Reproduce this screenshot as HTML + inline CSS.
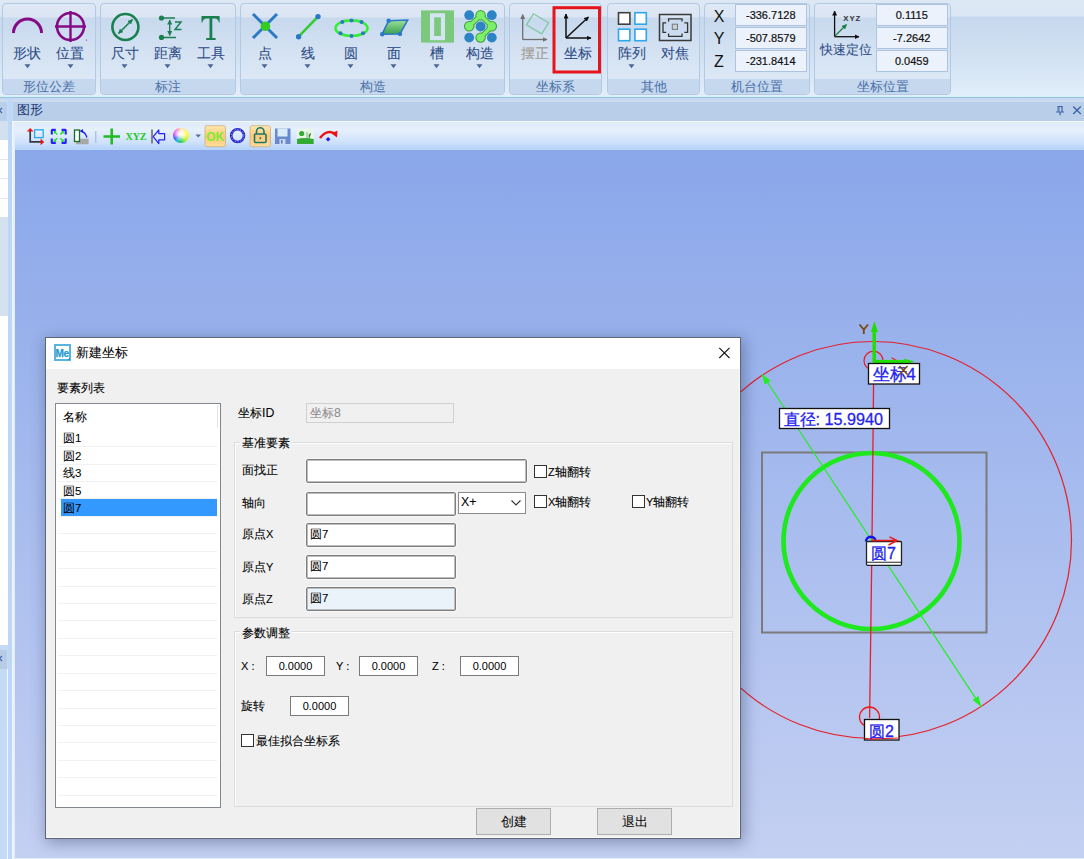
<!DOCTYPE html>
<html><head><meta charset="utf-8">
<style>
*{box-sizing:border-box;margin:0;padding:0}
html,body{width:1084px;height:859px;overflow:hidden;background:#c4d9f2;font-family:"Liberation Sans",sans-serif;}
.a{position:absolute}
#ribbon{left:0;top:0;width:1084px;height:97px;background:linear-gradient(#dde8f5 0,#dbe6f4 16px,#c6d8ee 17px,#cfdff1 50px,#e1eefa 95px,#e3f1fb 97px)}
.grp{position:absolute;top:3px;height:92px;border:1px solid #b3c8e2;border-radius:4px;background:linear-gradient(#dfe8f5 0,#dbe5f3 13px,#c8d9ee 14px,#d3e1f2 45px,#dce8f6 75px);overflow:hidden}
.grp .lbl{position:absolute;left:0;right:0;bottom:0;height:15.5px;background:#c5d8ee;color:#4a6fa8;font-size:13.4px;line-height:16px;text-align:center}
.it{position:absolute;top:0;width:40px;height:76px}
.it .t{position:absolute;left:-10px;right:-10px;top:42px;text-align:center;font-size:13px;line-height:16px;color:#2c4a85}
.dd{position:absolute;top:63px;width:0;height:0;border-left:3px solid transparent;border-right:3px solid transparent;border-top:3px solid #4a6696}
.rt{text-align:center;font-size:14px;line-height:16px;color:#2c4a85;margin-left:0;-webkit-text-stroke-width:.08px}
.xyz{width:14px;text-align:center;font-size:16px;line-height:18px;color:#111;margin-top:1.5px}
.dt{font-size:12.3px;line-height:16px;color:#000;white-space:nowrap;-webkit-text-stroke-width:.08px}
.gb{border:1px solid #dcdcdc;box-shadow:inset 1px 1px 0 #fff}
.ib{border:1px solid #7e7e7e;border-radius:2px;background:#fff;box-shadow:inset 0 0 0 1px #bdbdbd,0 0 0 1px #f8f8f8}
.cb{width:13px;height:13px;border:1px solid #333;background:#fff}
.nbx{height:20px;border:1px solid #7a7a7a;background:#fff;font-size:11px;line-height:18px;text-align:center;color:#000}
.btn{border:1px solid #adadad;background:#e1e1e1;font-size:13px;line-height:25px;text-align:center;color:#000}
.nb{position:absolute;width:71.5px;height:22px;border:1px solid #adc3e0;background:#ecf2fb;font-size:11px;line-height:20px;text-align:center;color:#111;-webkit-text-stroke:.2px #111}
</style></head><body>
<div id="ribbon" class="a"></div>
<!-- groups -->
<div class="grp" style="left:2px;width:94px"><div class="lbl">形位公差</div></div>
<div class="grp" style="left:100px;width:136px"><div class="lbl">标注</div></div>
<div class="grp" style="left:240px;width:265px"><div class="lbl">构造</div></div>
<div class="grp" style="left:509px;width:93px"><div class="lbl">坐标系</div></div>
<div class="grp" style="left:607px;width:93px"><div class="lbl">其他</div></div>
<div class="grp" style="left:704px;width:106px"><div class="lbl">机台位置</div></div>
<div class="grp" style="left:814px;width:137px"><div class="lbl">坐标位置</div></div>

<!-- ribbon items text -->
<div class="a rt" style="left:7px;top:45px;width:40px">形状</div>
<div class="a rt" style="left:50px;top:45px;width:40px">位置</div>
<div class="a rt" style="left:105px;top:45px;width:40px">尺寸</div>
<div class="a rt" style="left:148px;top:45px;width:40px">距离</div>
<div class="a rt" style="left:191px;top:45px;width:40px">工具</div>
<div class="a rt" style="left:245px;top:45px;width:40px">点</div>
<div class="a rt" style="left:288px;top:45px;width:40px">线</div>
<div class="a rt" style="left:331px;top:45px;width:40px">圆</div>
<div class="a rt" style="left:374px;top:45px;width:40px">面</div>
<div class="a rt" style="left:417px;top:45px;width:40px">槽</div>
<div class="a rt" style="left:460px;top:45px;width:40px">构造</div>
<div class="a rt" style="left:515px;top:45px;width:40px;color:#a09a90">摆正</div>
<div class="a rt" style="left:558px;top:45px;width:40px">坐标</div>
<div class="a rt" style="left:612px;top:45px;width:40px">阵列</div>
<div class="a rt" style="left:655px;top:45px;width:40px">对焦</div>
<div class="a rt" style="left:816px;top:41.5px;width:60px;font-size:13.3px">快速定位</div>
<div class="a xyz" style="left:712px;top:6px">X</div>
<div class="a xyz" style="left:712px;top:28px">Y</div>
<div class="a xyz" style="left:712px;top:51px">Z</div>
<div class="nb" style="left:735px;top:4px">-336.7128</div>
<div class="nb" style="left:735px;top:27px">-507.8579</div>
<div class="nb" style="left:735px;top:50px">-231.8414</div>
<div class="nb" style="left:876px;top:4px">0.1115</div>
<div class="nb" style="left:876px;top:27px">-7.2642</div>
<div class="nb" style="left:876px;top:50px">0.0459</div>
<svg class="a" style="left:0;top:0" width="1084" height="97" viewBox="0 0 1084 97">
<defs>
<marker id="ah" viewBox="0 0 10 10" refX="9" refY="5" markerUnits="userSpaceOnUse" markerWidth="5" markerHeight="5" orient="auto-start-reverse"><path d="M0,0 L10,5 L0,10 z" fill="#1a8050"/></marker>
<marker id="ak" viewBox="0 0 10 10" refX="9" refY="5" markerUnits="userSpaceOnUse" markerWidth="5" markerHeight="5" orient="auto-start-reverse"><path d="M0,0 L10,5 L0,10 z" fill="#111"/></marker>
<marker id="ag" viewBox="0 0 10 10" refX="9" refY="5" markerUnits="userSpaceOnUse" markerWidth="5" markerHeight="5" orient="auto-start-reverse"><path d="M0,0 L10,5 L0,10 z" fill="#707070"/></marker>
<marker id="agr" viewBox="0 0 10 10" refX="9" refY="5" markerUnits="userSpaceOnUse" markerWidth="5" markerHeight="5" orient="auto"><path d="M0,0 L10,5 L0,10 z" fill="#1a8040"/></marker>
<linearGradient id="pg" x1="0" y1="0" x2="0" y2="1"><stop offset="0" stop-color="#9ee09a"/><stop offset="1" stop-color="#3aa050"/></linearGradient>
</defs>
<!-- dropdown arrows -->
<g fill="#4a6696">
<path d="M24.5,64.3 h6 l-3,4z"/><path d="M67.5,64.3 h6 l-3,4z"/>
<path d="M121.5,64.3 h6 l-3,4z"/><path d="M164.5,64.3 h6 l-3,4z"/><path d="M207.5,64.3 h6 l-3,4z"/>
<path d="M261.5,64.3 h6 l-3,4z"/><path d="M304.5,64.3 h6 l-3,4z"/><path d="M347.5,64.3 h6 l-3,4z"/>
<path d="M390.5,64.3 h6 l-3,4z"/><path d="M433.5,64.3 h6 l-3,4z"/><path d="M476.5,64.3 h6 l-3,4z"/>
<path d="M628.5,64.3 h6 l-3,4z"/>
</g>
<!-- 形状 -->
<path d="M13.5,33 A14,14 0 0 1 41.5,33" fill="none" stroke="#850a85" stroke-width="3"/>
<!-- 位置 -->
<circle cx="70.5" cy="26.5" r="13.5" fill="none" stroke="#850a85" stroke-width="2.6"/>
<path d="M70.5,11 V42 M55,26.5 H86" stroke="#850a85" stroke-width="2.4"/>
<circle cx="86.5" cy="40" r=".6" fill="#850a85"/>
<!-- 尺寸 -->
<circle cx="125.4" cy="27" r="13" fill="none" stroke="#1a8050" stroke-width="2.6"/>
<path d="M118.5,33.5 L132.5,19.5" stroke="#1a8050" stroke-width="1.6" marker-start="url(#ah)" marker-end="url(#ah)"/>
<!-- 距离 -->
<circle cx="161.5" cy="18" r="2.6" fill="#1a8050"/><circle cx="161.5" cy="37.4" r="2.6" fill="#1a8050"/>
<path d="M161.5,18 H175 M161.5,37.4 H176" stroke="#1a8050" stroke-width="1.5"/>
<path d="M169.7,20 V35.5" stroke="#1a8050" stroke-width="1.4" marker-start="url(#ah)" marker-end="url(#ah)"/>
<path d="M175,22 H181 L175,29.5 H181.5" fill="none" stroke="#1a8050" stroke-width="1.5"/>
<!-- 工具 T -->
<path d="M201.5,15.9 H219.6 V22.5 H218.9 Q218.3,18.6 215,18.4 H212.3 V38 H215.6 V40.1 H206.2 V38 H209.5 V18.4 H206.5 Q203,18.6 202.3,22.5 H201.5 Z" fill="#1a8050"/>
<!-- 点 -->
<path d="M253,14 L277,38 M277,14 L253,38" stroke="#2a78c6" stroke-width="3"/>
<circle cx="265.4" cy="26.3" r="4.8" fill="#33cc22"/>
<!-- 线 -->
<path d="M298.6,36.7 L318,16.6" stroke="#33cc33" stroke-width="2.6"/>
<circle cx="298.6" cy="36.7" r="2.7" fill="#2a78c6"/><circle cx="318" cy="16.6" r="2.7" fill="#2a78c6"/>
<!-- 圆 -->
<ellipse cx="351.5" cy="28.2" rx="16" ry="7.8" fill="none" stroke="#33ee33" stroke-width="2.6"/>
<g fill="#2a78c6"><circle cx="351.5" cy="20.4" r="2"/><circle cx="351.5" cy="36" r="2"/><circle cx="342.3" cy="21.9" r="2"/><circle cx="361.5" cy="22.1" r="2"/><circle cx="340.5" cy="33.2" r="2"/><circle cx="363" cy="33.2" r="2"/></g>
<!-- 面 -->
<path d="M388.6,20.8 L407.7,20 L400,33.9 L382,34.3 Z" fill="url(#pg)" stroke="#2a78c6" stroke-width="1.5"/>
<g fill="#2a78c6"><circle cx="388.6" cy="20.8" r="2.2"/><circle cx="400" cy="33.9" r="2.2"/><circle cx="382.2" cy="34.3" r="2.2"/></g>
<!-- 槽 -->
<rect x="421" y="10.4" width="33" height="32.2" fill="#7cc87c"/>
<rect x="430" y="13.2" width="15" height="27" fill="#d4e4f2"/>
<rect x="434.2" y="17.3" width="6.7" height="18.7" fill="#7cc87c"/>
<!-- 构造 -->
<g fill="#2b84c6"><circle cx="469.2" cy="15.2" r="4.9"/><circle cx="491.8" cy="15.2" r="4.9"/><circle cx="480.6" cy="26.5" r="5"/><circle cx="469.2" cy="37.6" r="4.9"/><circle cx="491.8" cy="37.6" r="4.9"/></g>
<path d="M469.2,26.3 L480.6,15.2 L491.8,26.3 L480.6,37.6" fill="none" stroke="#3c9a3c" stroke-width="5.2" stroke-linejoin="round"/>
<g fill="#3c9a3c"><circle cx="480.6" cy="15.2" r="5.2"/><circle cx="469.2" cy="26.3" r="5.2"/><circle cx="480.6" cy="37.6" r="5.2"/><circle cx="491.8" cy="26.3" r="5.2"/></g>
<path d="M469.2,26.3 L480.6,15.2 L491.8,26.3 L480.6,37.6" fill="none" stroke="#7cf06a" stroke-width="3.4" stroke-linejoin="round"/>
<g fill="#7cf06a"><circle cx="480.6" cy="15.2" r="4.2"/><circle cx="469.2" cy="26.3" r="4.2"/><circle cx="480.6" cy="37.6" r="4.2"/><circle cx="491.8" cy="26.3" r="4.2"/></g>
<!-- 摆正 -->
<path d="M522.7,39.5 V14.5" stroke="#707070" stroke-width="1.3" marker-end="url(#ag)"/>
<path d="M522.7,39.5 H547" stroke="#707070" stroke-width="1.3" marker-end="url(#ag)"/>
<path d="M526.4,24.9 L533.4,13.8 L548.6,22.8 L541.7,33.9 Z" fill="none" stroke="#80c8a0" stroke-width="1.3"/>
<!-- 坐标 -->
<path d="M566,38 V14" stroke="#111" stroke-width="1.5" marker-end="url(#ak)"/>
<path d="M566,38 H591" stroke="#111" stroke-width="1.5" marker-end="url(#ak)"/>
<path d="M566,38 L588.5,17" stroke="#111" stroke-width="1.5" marker-end="url(#ak)"/>
<rect x="554" y="7.7" width="45.5" height="64.3" fill="none" stroke="#e8141c" stroke-width="3"/>
<!-- 阵列 -->
<rect x="618.5" y="12.7" width="11.4" height="11.5" fill="#fff" stroke="#404040" stroke-width="1.6"/>
<rect x="634.9" y="12.7" width="11.4" height="11.5" fill="#fff" stroke="#2fa6ea" stroke-width="1.6"/>
<rect x="618.5" y="29.2" width="11.4" height="11.5" fill="#fff" stroke="#2fa6ea" stroke-width="1.6"/>
<rect x="634.9" y="29.2" width="11.4" height="11.5" fill="#fff" stroke="#2fa6ea" stroke-width="1.6"/>
<!-- 对焦 -->
<rect x="659.5" y="14.5" width="31.5" height="26" fill="none" stroke="#3a3a3a" stroke-width="1.5"/>
<path d="M666.2,22.9 H663 V32.3 H666.2 M684.3,22.9 H687.6 V32.3 H684.3 M668.6,21.6 V18.8 H682 V21.6 M668.6,33.4 V36.3 H682 V33.4" fill="none" stroke="#333" stroke-width="1.3"/>
<rect x="672.3" y="24.2" width="5.2" height="5.2" fill="#c8d0dc" stroke="#777" stroke-width="1"/>
<!-- 快速定位 -->
<path d="M834.6,36.7 V11" stroke="#111" stroke-width="1.3" marker-end="url(#ak)"/>
<path d="M834.6,36.7 H859" stroke="#111" stroke-width="1.3" marker-end="url(#ak)"/>
<path d="M835,36 L846.5,24.5" stroke="#1a8040" stroke-width="1.2" marker-end="url(#agr)"/>
<text x="843.2" y="20.8" font-family="Liberation Sans" font-size="7.8" font-weight="bold" fill="#333" letter-spacing="1">XYZ</text>
</svg>

<!-- ribbon bottom lines -->
<div class="a" style="left:0;top:96px;width:1084px;height:1px;background:#c9f4fa"></div>
<div class="a" style="left:0;top:97px;width:1084px;height:1px;background:#a9bedb"></div>
<div class="a" style="left:0;top:98px;width:1084px;height:4px;background:linear-gradient(#c2d6ef,#cfdef1)"></div>

<!-- left dock panel -->
<div class="a" style="left:0;top:102px;width:8px;height:757px;background:#c4dbf7"></div>
<div class="a" style="left:0;top:102px;width:7px;height:19px;background:#b9cfe9"></div>
<div class="a" style="left:0;top:121px;width:8px;height:19px;background:#d2e0f0"></div>
<div class="a" style="left:0;top:140px;width:8px;height:77px;background:#fff"></div>
<div class="a" style="left:0;top:159px;width:8px;height:1px;background:#e3e8ee"></div>
<div class="a" style="left:0;top:178px;width:8px;height:1px;background:#e3e8ee"></div>
<div class="a" style="left:0;top:198px;width:8px;height:1px;background:#e3e8ee"></div>
<div class="a" style="left:0;top:217px;width:8px;height:99px;background:#d4e2f0"></div>
<div class="a" style="left:0;top:316px;width:8px;height:329px;background:#fff"></div>
<div class="a" style="left:0;top:650px;width:7px;height:19px;background:#b8cce6"></div>
<div class="a" style="left:7px;top:669px;width:1px;height:190px;background:#f2f8fe"></div>
<div class="a" style="left:8px;top:98px;width:4px;height:761px;background:#bcd7f8"></div>
<div class="a" style="left:12px;top:121px;width:3px;height:738px;background:linear-gradient(90deg,#f4f8fd,#dfeaf8)"></div>

<!-- main panel header -->
<div class="a" style="left:13px;top:102px;width:1071px;height:19px;background:#b9cfe9"></div>
<div class="a" style="left:17px;top:100px;font-size:13px;line-height:19px;color:#1a3874">图形</div>
<div class="a" style="left:12px;top:121px;width:1072px;height:1px;background:#f4f8fd"></div>
<!-- toolbar -->
<div class="a" style="left:15px;top:122px;width:1069px;height:28px;background:linear-gradient(#e0ebf9 0,#e6f0fc 8px,#cfe2fb 20px,#b7d3fa 27px,#bcd7fb 28px)"></div>
<!-- canvas -->
<div class="a" id="canvas" style="left:15px;top:150px;width:1069px;height:708px;background:linear-gradient(#8aa7ea 0,#c4d0f2 708px)"></div>
<div class="a" style="left:15px;top:858px;width:1069px;height:1px;background:#e8eef8"></div>


<!-- canvas drawings -->
<svg class="a" style="left:0;top:150px" width="1084" height="708" viewBox="0 150 1084 708">
<defs>
<marker id="gA" viewBox="0 0 12 8" refX="12" refY="4" markerUnits="userSpaceOnUse" markerWidth="12" markerHeight="7" orient="auto-start-reverse"><path d="M0,0 L12,4 L0,8 z" fill="#22ee22"/></marker>
</defs>
<circle cx="873" cy="540" r="198.5" fill="none" stroke="#e4202a" stroke-width="1.2"/>
<rect x="762" y="452.5" width="224.5" height="180" fill="none" stroke="#7b7b7b" stroke-width="2"/>
<circle cx="871.5" cy="541" r="88" fill="none" stroke="#1ee81e" stroke-width="4.6"/>
<path d="M873.8,361 L873.2,420 L872,540 L869.6,718" fill="none" stroke="#e4202a" stroke-width="1.3"/>
<path d="M762,374 L981.3,706.8" stroke="#22ee22" stroke-width="1.2" marker-start="url(#gA)" marker-end="url(#gA)"/>
<circle cx="873.5" cy="360.7" r="9.5" fill="none" stroke="#e4202a" stroke-width="1.2"/>
<path d="M891.5,357.8 L896.5,360.5" stroke="#e4202a" stroke-width="1.2"/>
<!-- Y axis -->
<path d="M874.2,362.5 V331" stroke="#22dd00" stroke-width="3.4"/>
<path d="M874.4,321 L877.8,332 H870.9 Z" fill="#22dd00"/>
<path d="M873,361.6 H905" stroke="#22dd00" stroke-width="3.4"/>
<path d="M914.6,361.6 L904.3,358.8 V364.4 Z" fill="#22dd00"/>
<path d="M859.5,324.5 L863.8,329.5 L868,324.5 M863.8,329.5 V334" fill="none" stroke="#7a4810" stroke-width="1.8"/>
<!-- label 坐标4 -->
<rect x="868.5" y="363.5" width="51" height="20.5" fill="#fff" stroke="#111" stroke-width="1.3"/>
<text x="872.5" y="380" font-family="Liberation Sans" font-size="16.5" fill="#2424ee" stroke="#2424ee" stroke-width=".3">坐标4</text>
<path d="M899.5,366 L907.5,374.5 M907.5,366 L899.5,374.5" stroke="#7a4810" stroke-width="1.6"/>
<!-- label 直径 -->
<rect x="779.5" y="408.5" width="110" height="20" fill="#fff" stroke="#111" stroke-width="1.3"/>
<text x="783.5" y="424.8" font-family="Liberation Sans" font-size="16.2" fill="#2424ee" stroke="#2424ee" stroke-width=".3">直径: 15.9940</text>
<!-- circle 7 marker -->
<path d="M866,541.5 A4.8,4.8 0 1 1 875.6,541.5" fill="none" stroke="#1010ee" stroke-width="2.4"/>
<rect x="866.5" y="541.5" width="35" height="23.8" rx="1" fill="#fff" stroke="#222" stroke-width="1.3"/>
<path d="M866.5,562.3 H901.5" stroke="#222" stroke-width="1.1"/>
<path d="M871.5,540.6 H897 M889.5,536.8 L897,540.6 L888.5,545" fill="none" stroke="#ee1a1a" stroke-width="1.5"/>
<text x="871" y="559" font-family="Liberation Sans" font-size="16" fill="#2424ee" stroke="#2424ee" stroke-width=".3">圆7</text>
<!-- circle 2 marker -->
<circle cx="869.5" cy="717" r="10" fill="none" stroke="#ee1a1a" stroke-width="1.3"/>
<rect x="864.5" y="719.5" width="34.5" height="20.5" fill="#fff" stroke="#111" stroke-width="1.3"/>
<path d="M865,738.6 Q880,739.2 898,738" stroke="#ee1a1a" stroke-width="1.2" fill="none"/>
<text x="869" y="737" font-family="Liberation Sans" font-size="16" fill="#2424ee" stroke="#2424ee" stroke-width=".3">圆2</text>
</svg>
<!-- toolbar icons -->
<svg class="a" style="left:0;top:120px" width="360" height="30" viewBox="0 120 360 30">
<defs>
<linearGradient id="okg" x1="0" y1="0" x2="0" y2="1"><stop offset="0" stop-color="#ffe6b0"/><stop offset=".5" stop-color="#ffc878"/><stop offset="1" stop-color="#ffdc98"/></linearGradient>
<radialGradient id="cw" cx=".4" cy=".35" r=".7"><stop offset="0" stop-color="#fff"/><stop offset=".35" stop-color="#ffe070"/><stop offset=".6" stop-color="#ff50a0"/><stop offset="1" stop-color="#3050e0"/></radialGradient>
</defs>
<!-- icon1 -->
<path d="M30.2,131 V141.9 H41.5" fill="none" stroke="#333a44" stroke-width="1.7"/>
<path d="M30.2,128 L26.8,131.6 H33.6 Z M44.2,141.9 L40.6,138.6 V145.2 Z" fill="#ee1111"/>
<rect x="34.6" y="129.8" width="8.6" height="7.8" fill="none" stroke="#2aa8ee" stroke-width="1.3"/>
<!-- icon2 -->
<path d="M55.8,129.9 H52.3 Q51.8,129.9 51.8,130.4 V134.6 M61.6,129.9 H65.2 Q65.7,129.9 65.7,130.4 V134.6 M51.8,138.5 V142.4 Q51.8,142.9 52.3,142.9 H55.8 M65.7,138.5 V142.4 Q65.7,142.9 65.2,142.9 H61.6" fill="none" stroke="#2222ff" stroke-width="2.1"/>
<path d="M57.3,134.5 L54.5,131.8 M60.3,134.5 L63,131.8 M57.3,138.3 L54.5,141 M60.3,138.3 L63,141" stroke="#22dd22" stroke-width="1.3"/>
<path d="M53.6,130.9 L56.6,131.3 L54,133.9 Z M63.9,130.9 L60.9,131.3 L63.5,133.9 Z M53.6,141.9 L56.6,141.5 L54,138.9 Z M63.9,141.9 L60.9,141.5 L63.5,138.9 Z" fill="#22dd22"/>
<!-- icon3 -->
<rect x="76" y="138.7" width="12.6" height="5.6" fill="#a8a8a8"/>
<rect x="74.5" y="130" width="5" height="11.5" fill="#fff" stroke="#1a6a2a" stroke-width="1.3"/>
<path d="M80.5,131 Q85,131.5 87,137.5" fill="none" stroke="#1a1aee" stroke-width="1.3"/>
<path d="M80,131 L83,129 L83,133 Z" fill="#1a1aee"/>
<rect x="95.3" y="131" width="1" height="12" fill="#9ab2d6"/>
<!-- plus -->
<path d="M111.7,128.5 V144.5 M103.5,136.5 H120" stroke="#22bb22" stroke-width="2.6"/>
<text x="125.6" y="139.7" font-family="Liberation Serif" font-size="10.2" font-weight="bold" fill="#22cc22" letter-spacing="-0.3">XYZ</text>
<!-- arrow -->
<rect x="151" y="129.5" width="2" height="14" fill="#858585"/>
<path d="M153.2,136.7 L158.8,130 V133.6 H164.6 V139.8 H158.8 V143.6 Z" fill="none" stroke="#2222ee" stroke-width="1.2" stroke-linejoin="round"/>
<!-- color wheel -->

<path d="M195.5,134.5 H201 L198.2,137.5 Z" fill="#5a6a8a"/>
<!-- OK -->
<rect x="205" y="125.7" width="20.5" height="21" rx="2" fill="url(#okg)" stroke="#c8b080" stroke-width=".8"/>
<text x="206.2" y="140.8" font-family="Liberation Sans" font-size="12" font-weight="bold" fill="#77ee33">OK</text>
<!-- dotted circle -->
<circle cx="237.6" cy="135.6" r="6.4" fill="none" stroke="#2424c8" stroke-width="2.6"/><circle cx="237.6" cy="135.6" r="6.2" fill="none" stroke="#e8ecff" stroke-width=".7" stroke-dasharray="1.2 1.6"/>
<!-- lock -->
<rect x="250" y="125.7" width="20.5" height="21" rx="2" fill="url(#okg)" stroke="#c8b080" stroke-width=".8"/>
<path d="M256.5,134 V131.5 A3.7,3.7 0 0 1 264,131.5 V134" fill="none" stroke="#1a7a6a" stroke-width="1.6"/>
<rect x="254.5" y="134" width="11.5" height="8.5" rx="1" fill="none" stroke="#1a7a6a" stroke-width="1.6"/>
<rect x="259.5" y="137.2" width="1.6" height="2" fill="#1a7a6a"/>
<!-- save -->
<path d="M275,128.5 H290.5 V144 H275 Z" fill="#6a8ad0"/>
<rect x="277.5" y="128.5" width="10" height="8" fill="#d8ecfa"/>
<rect x="279.5" y="139" width="6" height="5" fill="#c8d8f0"/>
<rect x="281" y="140" width="1.5" height="3.5" fill="#5a7ac0"/>
<!-- image icon -->
<rect x="297" y="128.5" width="16.7" height="15.5" fill="#e8f6e8"/>
<rect x="297" y="139" width="16.7" height="5" fill="#33aa33"/>
<circle cx="301.7" cy="133.5" r="2.6" fill="#33aa33"/>
<path d="M307,139 V132 M309,139 V134.5 L311,133" stroke="#66bb66" stroke-width="1"/>
<path d="M297,139 Q303,137 313.7,139" fill="#33aa33"/>
<!-- red arrow -->
<path d="M320,138 Q327,129 334.5,133.5" fill="none" stroke="#ee1111" stroke-width="2.6"/>
<path d="M337,137.5 L337.5,130.5 L331.5,133.5 Z" fill="#ee1111"/>
<path d="M328.1,137 L330.4,139.3 L328.1,141.6 L325.8,139.3 Z" fill="#1a1aee"/>
</svg>
<div class="a" style="left:173.4px;top:127.9px;width:15.2px;height:15.2px;border-radius:50%;background:radial-gradient(circle at 45% 40%,#fff 0,rgba(255,255,255,.85) 18%,rgba(255,255,255,0) 60%),conic-gradient(#ffd8a0 0deg,#ffff40 70deg,#c0f040 130deg,#30d060 180deg,#20b0e0 220deg,#3050f0 245deg,#e030e0 290deg,#ff50a0 330deg,#ffd8a0 360deg)"></div>
<!-- header pin & close -->
<svg class="a" style="left:1050px;top:102px" width="34" height="18" viewBox="1050 102 34 18">
<path d="M1057.5,106.5 H1062.8 M1058.2,106.5 V111.8 M1062,106.5 V111.8 M1056.2,112 H1064 M1060.1,112 V115.2" fill="none" stroke="#3a64a4" stroke-width="1.2"/><rect x="1058.6" y="107" width="1.2" height="4.6" fill="#7a98c8"/>
<path d="M1073.2,106.5 L1080.8,114 M1080.8,106.5 L1073.2,114" stroke="#3a64a4" stroke-width="1.3"/>
</svg>
<svg class="a" style="left:0;top:102px" width="8" height="18"><path d="M-3,6 L2,11 M2,6 L-3,11" stroke="#3a64a4" stroke-width="1.2"/></svg>
<svg class="a" style="left:0;top:650px" width="8" height="18"><path d="M-3,6 L2,11 M2,6 L-3,11" stroke="#3a64a4" stroke-width="1.2"/></svg>

<!-- dialog -->
<div class="a" id="dlg" style="left:45px;top:337px;width:696px;height:502px;border:1px solid #5d6675;background:#f0f0f0;box-shadow:2px 3px 14px 1px rgba(25,35,75,.36)"></div>
<div class="a" style="left:46px;top:338px;width:694px;height:31px;background:#fff"></div>
<div class="a" style="left:739px;top:369px;width:1px;height:469px;background:#fafafa"></div>
<div class="a" style="left:46px;top:837px;width:694px;height:1px;background:#fafafa"></div>
<svg class="a" style="left:54px;top:344px" width="17" height="17"><rect x="1" y="1" width="15" height="15" fill="#fff" stroke="#5ab4e0" stroke-width="2"/><text x="1.6" y="13.2" font-family="Liberation Sans" font-size="10" font-weight="bold" fill="#1f98d2" stroke="#1f98d2" stroke-width=".25" letter-spacing="-0.5">Me</text><path d="M13.5,16 L16,13.5 V16Z" fill="#1f98d2"/></svg>
<div class="a dt" style="left:75.5px;top:345px;font-size:12.5px">新建坐标</div>
<svg class="a" style="left:716px;top:345px" width="16" height="16"><path d="M3.3,2.8 L13.5,13 M13.5,2.8 L3.3,13" stroke="#1a1a1a" stroke-width="1.15"/></svg>
<div class="a dt" style="left:57px;top:380px">要素列表</div>
<div class="a" style="left:55px;top:403px;width:166px;height:405px;border:1px solid #828790;background:#fff"></div>
<div class="a" style="left:217px;top:405px;width:1px;height:23px;background:#e5e5e5"></div>
<div class="a dt" style="left:63px;top:409px">名称</div>

<div class="a" style="left:58px;top:446px;width:159px;height:1px;background:#f1f1f1"></div>
<div class="a" style="left:58px;top:464px;width:159px;height:1px;background:#f1f1f1"></div>
<div class="a" style="left:58px;top:481px;width:159px;height:1px;background:#f1f1f1"></div>
<div class="a" style="left:58px;top:498px;width:159px;height:1px;background:#f1f1f1"></div>
<div class="a" style="left:58px;top:516px;width:159px;height:1px;background:#f1f1f1"></div>
<div class="a" style="left:58px;top:533px;width:159px;height:1px;background:#f1f1f1"></div>
<div class="a" style="left:58px;top:551px;width:159px;height:1px;background:#f1f1f1"></div>
<div class="a" style="left:58px;top:568px;width:159px;height:1px;background:#f1f1f1"></div>
<div class="a" style="left:58px;top:586px;width:159px;height:1px;background:#f1f1f1"></div>
<div class="a" style="left:58px;top:603px;width:159px;height:1px;background:#f1f1f1"></div>
<div class="a" style="left:58px;top:620px;width:159px;height:1px;background:#f1f1f1"></div>
<div class="a" style="left:58px;top:638px;width:159px;height:1px;background:#f1f1f1"></div>
<div class="a" style="left:58px;top:655px;width:159px;height:1px;background:#f1f1f1"></div>
<div class="a" style="left:58px;top:673px;width:159px;height:1px;background:#f1f1f1"></div>
<div class="a" style="left:58px;top:690px;width:159px;height:1px;background:#f1f1f1"></div>
<div class="a" style="left:58px;top:708px;width:159px;height:1px;background:#f1f1f1"></div>
<div class="a" style="left:58px;top:725px;width:159px;height:1px;background:#f1f1f1"></div>
<div class="a" style="left:58px;top:742px;width:159px;height:1px;background:#f1f1f1"></div>
<div class="a" style="left:58px;top:760px;width:159px;height:1px;background:#f1f1f1"></div>
<div class="a" style="left:58px;top:777px;width:159px;height:1px;background:#f1f1f1"></div>
<div class="a" style="left:58px;top:795px;width:159px;height:1px;background:#f1f1f1"></div>
<div class="a" style="left:61px;top:499px;width:156px;height:17px;background:#3399ff"></div>
<div class="a dt" style="left:63px;top:430px">圆<span style="font-size:11.5px">1</span></div>
<div class="a dt" style="left:63px;top:448px">圆<span style="font-size:11.5px">2</span></div>
<div class="a dt" style="left:63px;top:465px">线<span style="font-size:11.5px">3</span></div>
<div class="a dt" style="left:63px;top:483px">圆<span style="font-size:11.5px">5</span></div>
<div class="a dt" style="left:63px;top:500px">圆<span style="font-size:11.5px">7</span></div>

<div class="a dt" style="left:238px;top:405px">坐标ID</div>
<div class="a" style="left:306px;top:403px;width:148px;height:20px;border:1px solid #d0d0d0;background:#f0f0f0"></div>
<div class="a dt" style="left:310px;top:405px;color:#8c8c8c">坐标8</div>

<div class="a gb" style="left:234px;top:442px;width:499px;height:176px"></div>
<div class="a dt" style="left:240px;top:435px;padding:0 2px;background:#f0f0f0">基准要素</div>
<div class="a dt" style="left:242px;top:462px">面找正</div>
<div class="a ib" style="left:306px;top:459px;width:221px;height:24px"></div>
<div class="a cb" style="left:534px;top:465px"></div>
<div class="a dt" style="left:548px;top:464px"><span style="font-size:11px">Z</span>轴翻转</div>
<div class="a dt" style="left:242px;top:495px">轴向</div>
<div class="a ib" style="left:306px;top:492px;width:150px;height:24px"></div>
<div class="a" style="left:458px;top:492px;width:68px;height:22px;border:1px solid #8a8a8a;background:#fff"></div>
<div class="a dt" style="left:461px;top:494px">X+</div>
<svg class="a" style="left:510px;top:498px" width="12" height="10"><path d="M1.5,2.5 L6,7 L10.5,2.5" fill="none" stroke="#333" stroke-width="1.1"/></svg>
<div class="a cb" style="left:534px;top:495px"></div>
<div class="a dt" style="left:548px;top:494px"><span style="font-size:11px">X</span>轴翻转</div>
<div class="a cb" style="left:632px;top:495px"></div>
<div class="a dt" style="left:646px;top:494px"><span style="font-size:11px">Y</span>轴翻转</div>
<div class="a dt" style="left:242px;top:526px">原点<span style="font-size:11px">X</span></div>
<div class="a ib" style="left:306px;top:523px;width:150px;height:24px"></div>
<div class="a dt" style="left:310px;top:526px">圆<span style="font-size:11.5px">7</span></div>
<div class="a dt" style="left:242px;top:559px">原点<span style="font-size:11px">Y</span></div>
<div class="a ib" style="left:306px;top:555px;width:150px;height:24px"></div>
<div class="a dt" style="left:310px;top:558px">圆<span style="font-size:11.5px">7</span></div>
<div class="a dt" style="left:242px;top:591px">原点<span style="font-size:11px">Z</span></div>
<div class="a ib" style="left:306px;top:587px;width:150px;height:24px;background:#eaf2fa"></div>
<div class="a dt" style="left:310px;top:590px">圆<span style="font-size:11.5px">7</span></div>

<div class="a gb" style="left:234px;top:631px;width:499px;height:176px"></div>
<div class="a dt" style="left:240px;top:625px;padding:0 2px;background:#f0f0f0">参数调整</div>
<div class="a dt" style="left:241px;top:658px;font-size:11px">X :</div>
<div class="a nbx" style="left:266px;top:656px;width:59px">0.0000</div>
<div class="a dt" style="left:336px;top:658px;font-size:11px">Y :</div>
<div class="a nbx" style="left:359px;top:656px;width:59px">0.0000</div>
<div class="a dt" style="left:432px;top:658px;font-size:11px">Z :</div>
<div class="a nbx" style="left:460px;top:656px;width:59px">0.0000</div>
<div class="a dt" style="left:241px;top:698px">旋转</div>
<div class="a nbx" style="left:290px;top:696px;width:59px">0.0000</div>
<div class="a cb" style="left:241px;top:734px"></div>
<div class="a dt" style="left:256px;top:733px;font-size:12.3px">最佳拟合坐标系</div>
<div class="a btn" style="left:476px;top:808px;width:75px;height:27px">创建</div>
<div class="a btn" style="left:597px;top:808px;width:75px;height:27px">退出</div>
</body></html>
